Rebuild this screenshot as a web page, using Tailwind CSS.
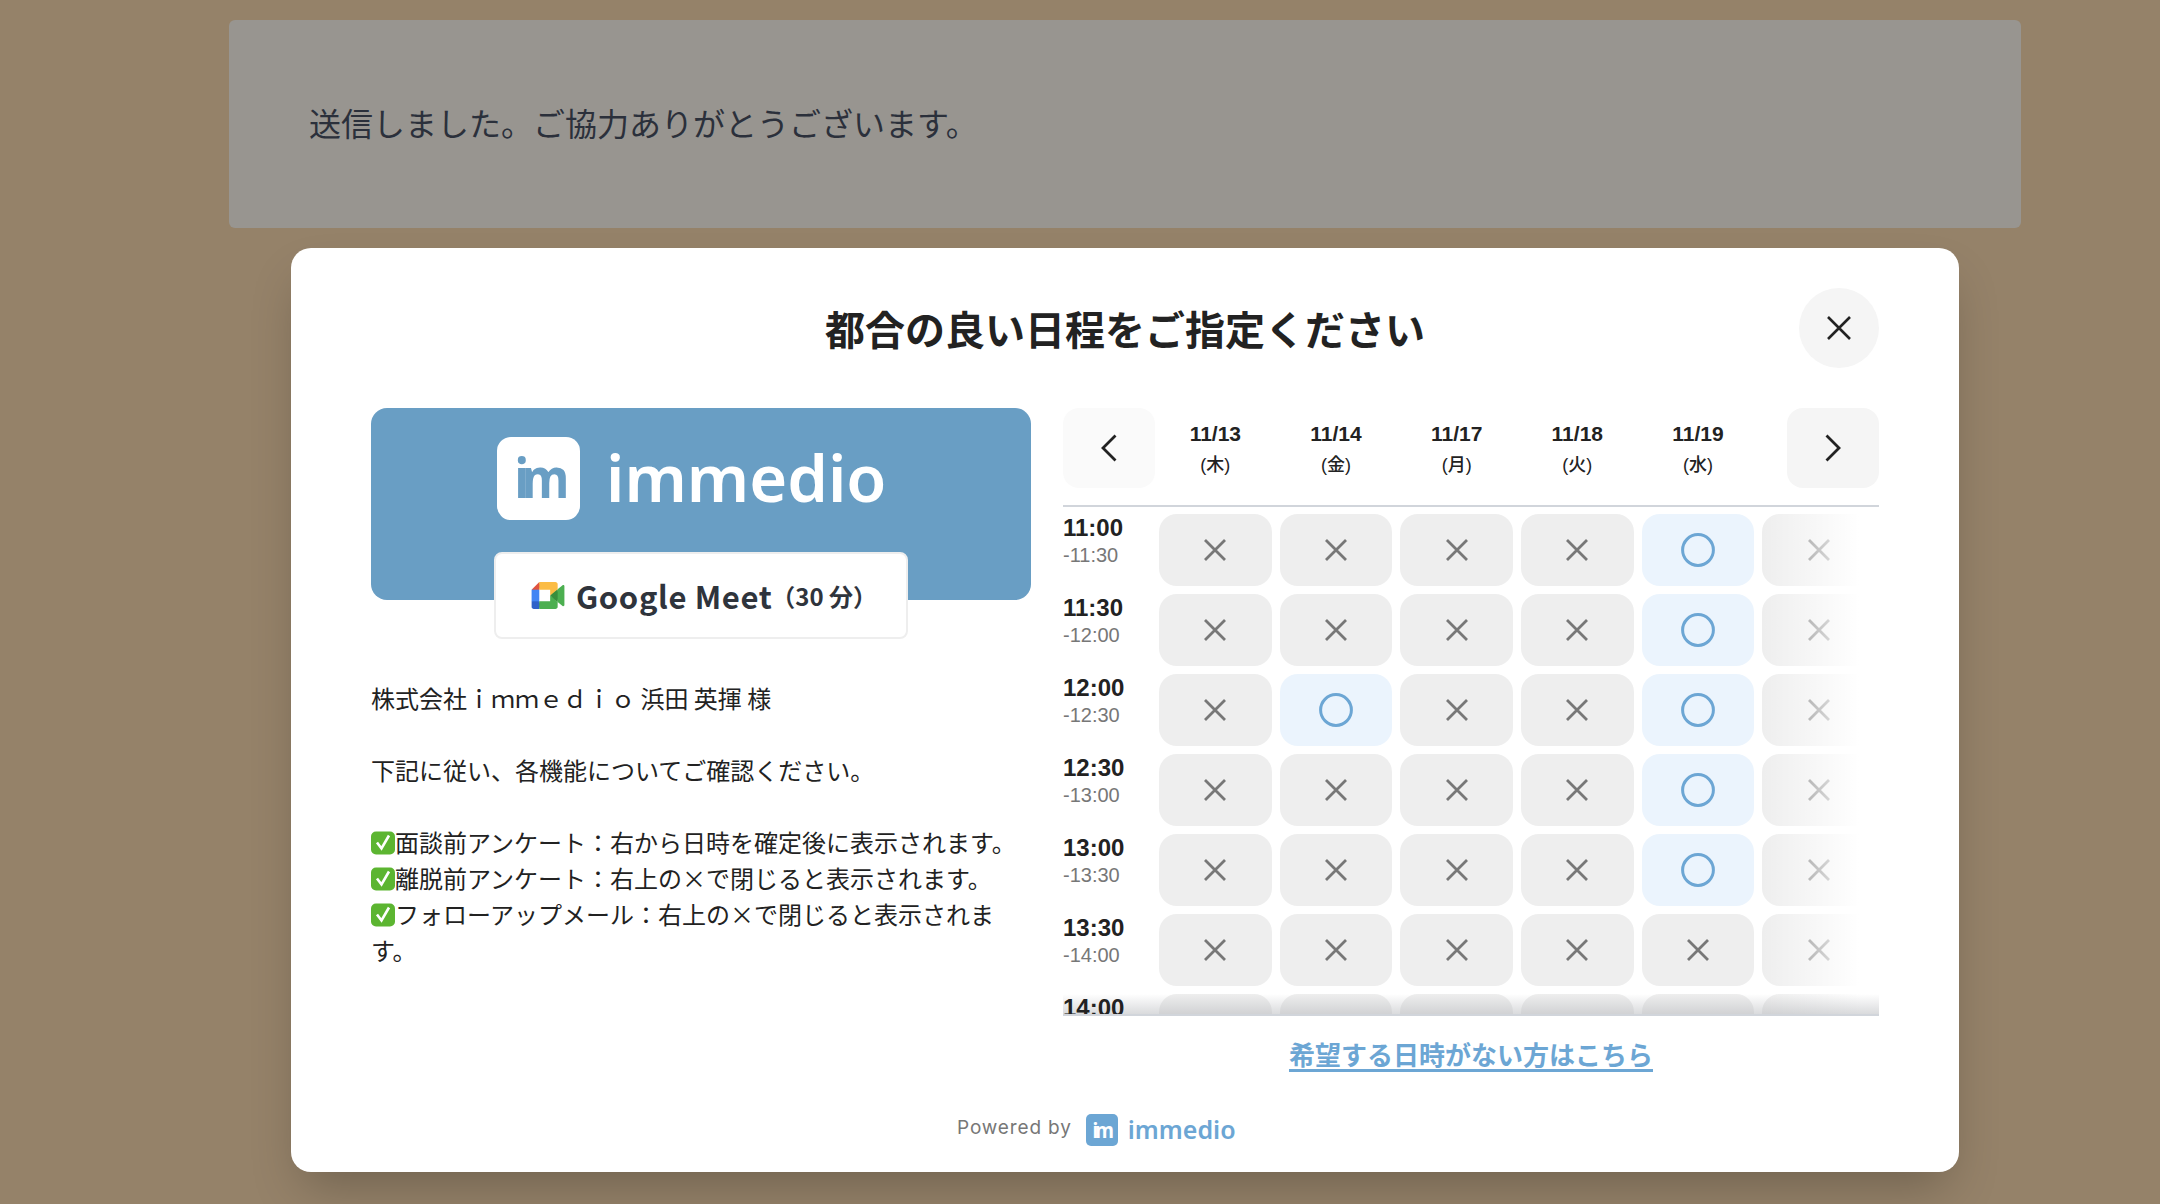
<!DOCTYPE html>
<html lang="ja">
<head>
<meta charset="utf-8"/>
<title>都合の良い日程をご指定ください</title>
<script src="https://cdn.jsdelivr.net/npm/@tailwindcss/browser@4"></script>
</head>
<body class="relative h-[1204px] w-[2160px] overflow-hidden bg-[#958269] font-['Noto_Sans_CJK_JP',sans-serif] text-[#222]">

  <!-- page behind the modal -->
  <div class="ml-[229px] mt-5 flex h-[208px] w-[1792px] items-center rounded-md bg-[#989590] pb-[4px] pl-[80px] text-[32px] text-[#2b303b]">
    送信しました。ご協力ありがとうございます。
  </div>

  <!-- modal -->
  <div class="absolute left-[291px] top-[248px] h-[924px] w-[1668px] rounded-[20px] bg-white px-[80px] pt-[40px] shadow-2xl">
    <div class="mb-[40px] grid h-[80px] grid-cols-[80px_1fr_80px] items-center">
      <div></div>
      <h1 class="text-center text-[40px] font-bold leading-none text-[#222]">都合の良い日程をご指定ください</h1>
      <button class="flex h-[80px] w-[80px] items-center justify-center rounded-full bg-[#f5f5f5]">
        <svg class="h-[32px] w-[32px]" viewBox="0 0 32 32" fill="none" stroke="#222" stroke-width="2.6"><path d="M5 5l22 22M27 5L5 27"/></svg>
      </button>
    </div>

    <div class="flex gap-[32px]">
      <!-- left column -->
      <div class="w-[660px] shrink-0">
        <div class="flex h-[192px] items-start gap-[26px] rounded-[16px] bg-[#699ec4] pl-[126px] pt-[29px]">
          <div class="flex h-[83px] w-[83px] items-center justify-center overflow-hidden rounded-[14px] bg-white">
            <span class="-translate-y-[3px] scale-x-[0.87] font-['Noto_Sans',sans-serif] text-[56px] font-bold leading-none tracking-[-0.15em] text-[#699ec4]">im</span>
          </div>
          <span class="-translate-y-[1px] font-['Noto_Sans',sans-serif] text-[65px] font-semibold leading-[83px] text-white">immedio</span>
        </div>
        <div class="mx-auto -mt-[48px] flex h-[87px] w-[414px] items-center rounded-lg border-2 border-[#eeeeee] bg-white pl-[35px]">
          <svg class="h-[27px] w-[34px]" viewBox="0 0 87.5 72">
            <path fill="#388e3c" d="M49.5 36l8.53 9.75 11.47 7.33 2-17.02-2-16.64-11.69 6.44z"/>
            <path fill="#2f62c9" d="M0 51.5V66c0 3.315 2.685 6 6 6h14.5l3-10.96-3-9.54-9.95-3z"/>
            <path fill="#e0533f" d="M20.5 0L0 20.5l10.55 3 9.95-3 2.95-9.41z"/>
            <path fill="#4285f4" d="M20.5 20.5H0v31h20.5z"/>
            <path fill="#4caf50" d="M82.6 8.68L69.5 19.42v33.66l13.16 10.79c1.97 1.54 4.85.135 4.85-2.37V11c0-2.535-2.945-3.925-4.91-2.32zM49.5 36v15.5h-29V72h43c3.315 0 6-2.685 6-6V53.08z"/>
            <path fill="#fbbc45" d="M63.5 0h-43v20.5h29V36l20-16.57V6c0-3.315-2.685-6-6-6z"/>
          </svg>
          <span class="ml-[11px] translate-y-[1px] text-[31px] font-semibold tracking-[0.02em] text-[#2f343c]">Google Meet</span>
          <span class="ml-[-1px] text-[24px] font-semibold text-[#2f343c]">（30 分）</span>
        </div>
        <div class="mt-[41px] text-[24px] leading-[36px] text-[#222]">
          <p>株式会社ｉｍｍｅｄｉｏ 浜田 英揮 様</p>
          <br/>
          <p>下記に従い、各機能についてご確認ください。</p>
          <br/>
          <p><svg class="inline-block h-[24px] w-[24px] align-[-3px]" viewBox="0 0 24 24"><rect x="0" y="0.5" width="24" height="23" rx="5" fill="#5cb531"/><path d="M6 11.5l4.5 6L18 4.5" fill="none" stroke="#fff" stroke-width="2.6"/></svg>面談前アンケート：右から日時を確定後に表示されます。</p>
          <p><svg class="inline-block h-[24px] w-[24px] align-[-3px]" viewBox="0 0 24 24"><rect x="0" y="0.5" width="24" height="23" rx="5" fill="#5cb531"/><path d="M6 11.5l4.5 6L18 4.5" fill="none" stroke="#fff" stroke-width="2.6"/></svg>離脱前アンケート：右上の×で閉じると表示されます。</p>
          <p><svg class="inline-block h-[24px] w-[24px] align-[-3px]" viewBox="0 0 24 24"><rect x="0" y="0.5" width="24" height="23" rx="5" fill="#5cb531"/><path d="M6 11.5l4.5 6L18 4.5" fill="none" stroke="#fff" stroke-width="2.6"/></svg>フォローアップメール：右上の×で閉じると表示されます。</p>
        </div>
      </div>

      <!-- right column: date picker -->
      <div class="w-[816px] shrink-0">
        <div class="flex h-[99px] items-start border-b-2 border-[#d1d5db]">
          <button class="flex h-[80px] w-[92px] items-center justify-center rounded-[16px] bg-[#fafafa]">
            <svg class="h-[28px] w-[18px]" viewBox="0 0 18 28" fill="none" stroke="#222" stroke-width="2.8"><path d="M15.5 1.5L3 14l12.5 12.5"/></svg>
          </button>
          <div id="dates" class="flex font-['Liberation_Sans','Noto_Sans_CJK_JP',sans-serif]"></div>
          <button class="ml-auto flex h-[80px] w-[92px] items-center justify-center rounded-[16px] bg-[#f5f5f5]">
            <svg class="h-[28px] w-[18px]" viewBox="0 0 18 28" fill="none" stroke="#222" stroke-width="2.8"><path d="M2.5 1.5L15 14 2.5 26.5"/></svg>
          </button>
        </div>
        <div class="relative h-[509px] overflow-hidden border-b-2 border-[#d1d5db] pt-[7px] font-['Liberation_Sans','Noto_Sans_CJK_JP',sans-serif]">
          <div id="rows" class="flex flex-col gap-[8px]"></div>
          <div class="absolute bottom-0 right-[20px] top-0 w-[97px] bg-gradient-to-r from-white/0 to-white"></div>
          <div class="absolute right-0 top-0 bottom-0 w-[20px] bg-white"></div>
          <div class="absolute inset-x-0 bottom-0 h-[20px] bg-gradient-to-b from-white/0 to-[#b4b6ba]/50"></div>
        </div>
        <div class="mt-[20px] text-center text-[26px] font-semibold leading-[36px] text-[#6ca6d4]">
          <a class="underline decoration-[3px] underline-offset-[4px]">希望する日時がない方はこちら</a>
        </div>
      </div>
    </div>

    <!-- footer -->
    <div class="absolute bottom-[26px] left-[666px] flex items-center">
      <span class="-translate-y-[2px] font-['Inter',sans-serif] text-[19px] tracking-[0.045em] text-[#777]">Powered by</span>
      <div class="ml-[14px] flex h-[32px] w-[32px] items-center justify-center overflow-hidden rounded-[5px] bg-[#6ca6d4]">
        <span class="-translate-y-[1px] scale-x-[0.87] font-['Noto_Sans',sans-serif] text-[22px] font-bold leading-none tracking-[-0.15em] text-white">im</span>
      </div>
      <span class="ml-[10px] -translate-y-[1px] font-['Noto_Sans',sans-serif] text-[25px] font-semibold leading-[32px] text-[#6ca6d4]">immedio</span>
    </div>
  </div>

  <script>
    var dates = [['11/13', '木'], ['11/14', '金'], ['11/17', '月'], ['11/18', '火'], ['11/19', '水']];
    document.getElementById('dates').innerHTML = dates.map(function (d) {
      return '<div class="flex h-[80px] w-[120.67px] flex-col items-center pt-[12px]">' +
        '<span class="text-[21px] font-bold leading-[28px] text-[#222]">' + d[0] + '</span>' +
        '<span class="mt-[3px] text-[18px] font-medium leading-[28px] text-[#222]">(' + d[1] + ')</span></div>';
    }).join('');

    var cross = '<svg class="h-[24px] w-[24px]" viewBox="0 0 24 24" fill="none" stroke="#777" stroke-width="2.8"><path d="M2 2l20 20M22 2L2 22"/></svg>';
    var circle = '<svg class="h-[34px] w-[34px]" viewBox="0 0 34 34" fill="none" stroke="#6ca6d4" stroke-width="3"><circle cx="17" cy="17" r="15.4"/></svg>';
    var rows = [
      ['11:00', '-11:30', 'xxxxox'],
      ['11:30', '-12:00', 'xxxxox'],
      ['12:00', '-12:30', 'xoxxox'],
      ['12:30', '-13:00', 'xxxxox'],
      ['13:00', '-13:30', 'xxxxox'],
      ['13:30', '-14:00', 'xxxxxx'],
      ['14:00', '', 'xxxxxx']
    ];
    document.getElementById('rows').innerHTML = rows.map(function (r) {
      var cells = r[2].split('').map(function (c) {
        return c === 'o'
          ? '<div class="flex h-[72px] w-[112.67px] items-center justify-center rounded-[18px] bg-[#ebf4fd]">' + circle + '</div>'
          : '<div class="flex h-[72px] w-[112.67px] items-center justify-center rounded-[18px] bg-[#eeeeee]">' + cross + '</div>';
      }).join('');
      return '<div class="flex h-[72px] gap-[8px]">' +
        '<div class="relative z-10 w-[88px]"><div class="text-[24px] font-bold leading-[28px] text-[#222]">' + r[0] + '</div>' +
        '<div class="text-[20px] leading-[26px] text-[#777]">' + r[1] + '</div></div>' + cells + '</div>';
    }).join('');
  </script>
</body>
</html>
